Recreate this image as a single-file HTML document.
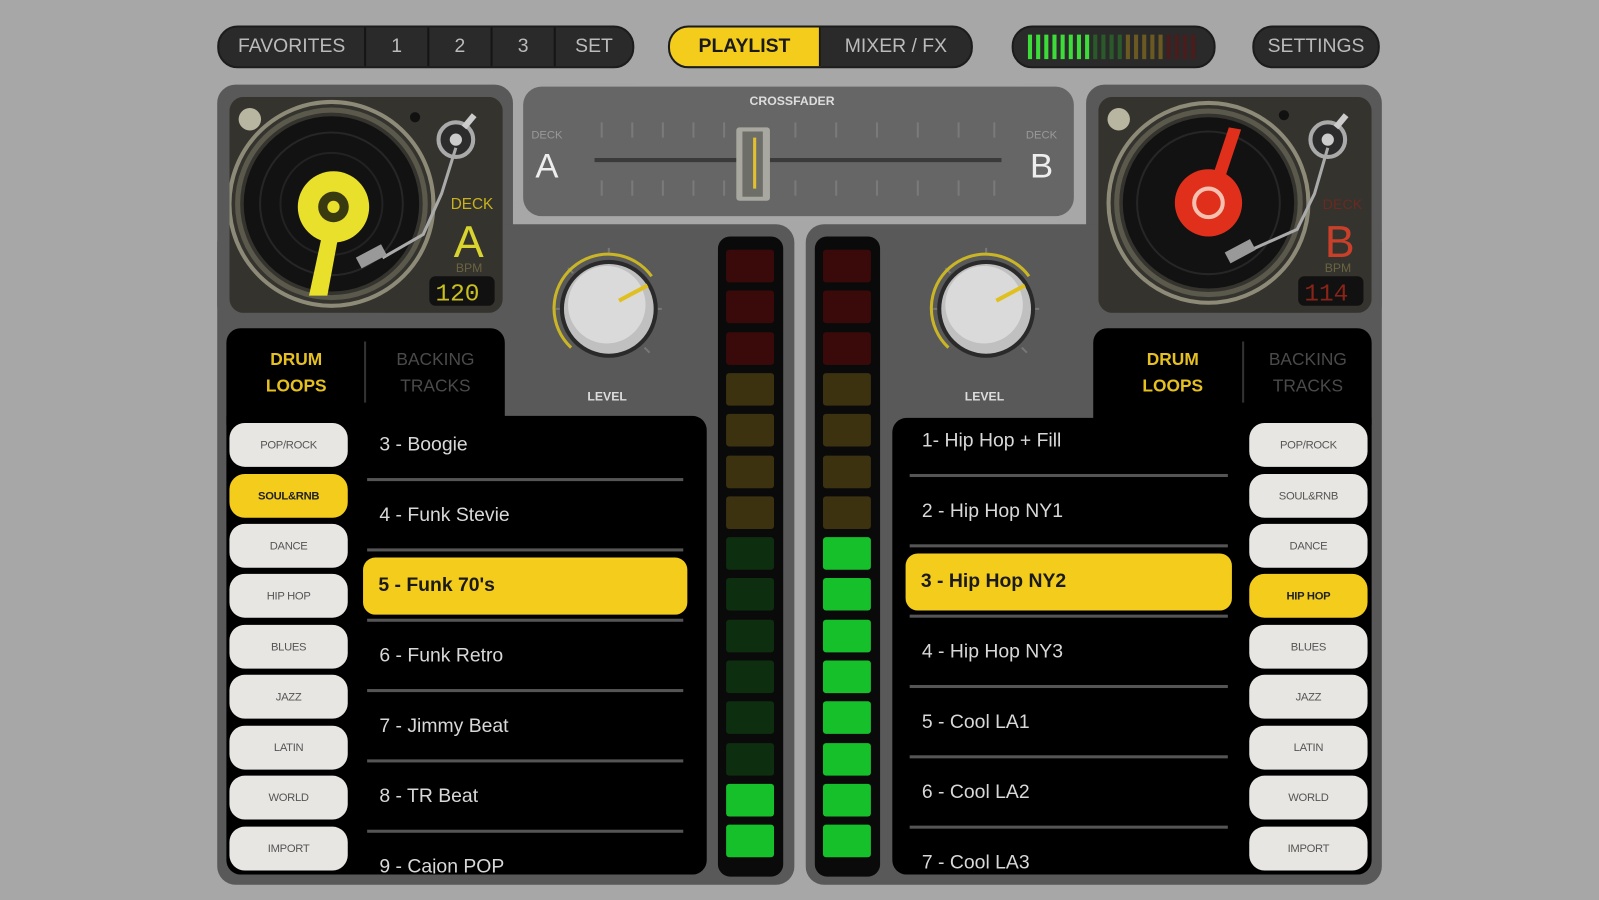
<!DOCTYPE html>
<html><head><meta charset="utf-8"><style>
*{box-sizing:border-box;margin:0;padding:0}
html,body{width:1599px;height:900px;overflow:hidden;background:#a7a7a7;font-family:"Liberation Sans",sans-serif}
#w{position:absolute;left:0;top:0;width:1568px;height:883px;transform:scale(1.0198,1.0193);transform-origin:0 0}
.a{position:absolute}
.pill{background:#2a2a2a;border-radius:20px;border:2px solid #1c1c1c;color:#bbb;font-size:19px;display:flex;align-items:center;overflow:hidden}
.pill span{height:100%;display:flex;align-items:center;justify-content:center;border-right:2px solid #151515}
.panel{background:#595959;border-radius:18px}
.g{position:absolute;left:225px;width:116px;height:43px;background:#e8e6e2;border-radius:15px;color:#555;font-size:11px;display:flex;align-items:center;justify-content:center;letter-spacing:-.3px;box-shadow:0 2px 2px #000}
.g.y{background:#f4cc1c;color:#222;font-weight:bold}
.t{position:absolute;color:#d8d8d8;font-size:19px}
.sep{position:absolute;height:3px;background:#555}
.hl{position:absolute;background:#f4cc1c;border-radius:12px;color:#1a1a1a;font-size:19px;font-weight:bold;padding-left:15px;display:flex;align-items:center}
.seg{position:absolute;width:47px;height:32px;border-radius:3px}
.tab{color:#e5c020;font-weight:bold;font-size:17px;text-align:center;line-height:26px}
.tab2{color:#4a4a4a;font-size:17px;text-align:center;line-height:26px}
</style></head><body><div id="w">
<div class="a pill" style="left:213px;top:25px;width:409px;height:42px">
<span style="width:144px">FAVORITES</span><span style="width:62px">1</span><span style="width:62px">2</span><span style="width:62px">3</span><span style="width:75px;border:none">SET</span></div>
<div class="a pill" style="left:655px;top:25px;width:299px;height:42px">
<span style="width:150px;background:#f4cc1c;color:#1a1a1a;font-weight:bold">PLAYLIST</span><span style="width:149px;border:none">MIXER / FX</span></div>
<div class="a pill" style="left:992px;top:25px;width:200px;height:42px;padding-left:12px">
<svg width="180" height="30"><g stroke-width="4">
<g stroke="#3ddc3a"><line x1="4" y1="3" x2="4" y2="27"/><line x1="12" y1="3" x2="12" y2="27"/><line x1="20" y1="3" x2="20" y2="27"/><line x1="28" y1="3" x2="28" y2="27"/><line x1="36" y1="3" x2="36" y2="27"/><line x1="44" y1="3" x2="44" y2="27"/><line x1="52" y1="3" x2="52" y2="27"/><line x1="60" y1="3" x2="60" y2="27"/></g>
<g stroke="#2a5a2a"><line x1="68" y1="3" x2="68" y2="27"/><line x1="76" y1="3" x2="76" y2="27"/><line x1="84" y1="3" x2="84" y2="27"/><line x1="92" y1="3" x2="92" y2="27"/></g>
<g stroke="#6a5a22"><line x1="100" y1="3" x2="100" y2="27"/><line x1="108" y1="3" x2="108" y2="27"/><line x1="116" y1="3" x2="116" y2="27"/><line x1="124" y1="3" x2="124" y2="27"/><line x1="132" y1="3" x2="132" y2="27"/></g>
<g stroke="#4a1c1c"><line x1="140" y1="3" x2="140" y2="27"/><line x1="148" y1="3" x2="148" y2="27"/><line x1="156" y1="3" x2="156" y2="27"/><line x1="164" y1="3" x2="164" y2="27"/></g></g></svg></div>
<div class="a pill" style="left:1228px;top:25px;width:125px;height:42px;justify-content:center">SETTINGS</div>

<div class="a panel" style="left:213px;top:83px;width:290px;height:235px"></div>
<div class="a panel" style="left:1065px;top:83px;width:290px;height:235px"></div>
<div class="a panel" style="left:213px;top:220px;width:566px;height:648px"></div>
<div class="a panel" style="left:790px;top:220px;width:565px;height:648px"></div>
<div class="a" style="left:508px;top:83px;width:550px;height:135px;background:#a7a7a7;border-radius:22px"></div>
<div class="a" style="left:513px;top:85px;width:540px;height:127px;background:#666;border-radius:18px"></div>
<div class="a" style="left:779px;top:222px;width:11px;height:650px;background:#a7a7a7"></div>

<div class="a" style="left:735px;top:92px;color:#ddd;font-size:12px;font-weight:bold">CROSSFADER</div>
<div class="a" style="left:521px;top:127px;color:#999;font-size:11px">DECK</div>
<div class="a" style="left:525px;top:144px;color:#eee;font-size:34px">A</div>
<div class="a" style="left:1006px;top:127px;color:#999;font-size:11px">DECK</div>
<div class="a" style="left:1010px;top:144px;color:#eee;font-size:34px">B</div>
<svg class="a" style="left:580px;top:115px" width="405" height="85">
<g stroke="#7a7a7a" stroke-width="2"><line x1="10" y1="5" x2="10" y2="20"/><line x1="40" y1="5" x2="40" y2="20"/><line x1="70" y1="5" x2="70" y2="20"/><line x1="100" y1="5" x2="100" y2="20"/><line x1="130" y1="5" x2="130" y2="20"/><line x1="200" y1="5" x2="200" y2="20"/><line x1="240" y1="5" x2="240" y2="20"/><line x1="280" y1="5" x2="280" y2="20"/><line x1="320" y1="5" x2="320" y2="20"/><line x1="360" y1="5" x2="360" y2="20"/><line x1="395" y1="5" x2="395" y2="20"/>
<line x1="10" y1="62" x2="10" y2="77"/><line x1="40" y1="62" x2="40" y2="77"/><line x1="70" y1="62" x2="70" y2="77"/><line x1="100" y1="62" x2="100" y2="77"/><line x1="130" y1="62" x2="130" y2="77"/><line x1="200" y1="62" x2="200" y2="77"/><line x1="240" y1="62" x2="240" y2="77"/><line x1="280" y1="62" x2="280" y2="77"/><line x1="320" y1="62" x2="320" y2="77"/><line x1="360" y1="62" x2="360" y2="77"/><line x1="395" y1="62" x2="395" y2="77"/></g>
<line x1="3" y1="42" x2="402" y2="42" stroke="#3a3a3a" stroke-width="4"/>
<rect x="142" y="10" width="33" height="72" rx="3" fill="#a8a8a0"/><rect x="148" y="14" width="20" height="64" fill="#6e6e68"/><line x1="160" y1="20" x2="160" y2="70" stroke="#e3c030" stroke-width="3"/></svg>

<svg class="a" style="left:225px;top:95px" width="268" height="212">
<rect width="268" height="212" rx="14" fill="#34332e"/>
<circle cx="100" cy="105" r="100" fill="none" stroke="#8d8a78" stroke-width="4"/>
<circle cx="100" cy="105" r="92" fill="none" stroke="#5b594c" stroke-width="5"/>
<circle cx="100" cy="105" r="86" fill="#121212"/>
<circle cx="100" cy="105" r="70" fill="none" stroke="#262626" stroke-width="2"/>
<circle cx="100" cy="105" r="50" fill="none" stroke="#222" stroke-width="2"/>
<path d="M92 130 L78 195 L96 195 L108 130Z" fill="#e8e02a"/>
<circle cx="102" cy="108" r="35" fill="#e8e02a"/>
<circle cx="102" cy="108" r="15" fill="#3a3a10"/><circle cx="102" cy="108" r="6" fill="#e8e02a"/>
<circle cx="20" cy="22" r="11" fill="#b8b5a0"/><circle cx="182" cy="20" r="5" fill="#111"/>
<circle cx="222" cy="42" r="17" fill="#2c2c2c" stroke="#aaa" stroke-width="4"/><circle cx="222" cy="42" r="6" fill="#ccc"/>
<path d="M230 30 L240 18" stroke="#ccc" stroke-width="6"/>
<path d="M222 50 L208 95 L190 135 L150 158" fill="none" stroke="#aaa" stroke-width="3"/>
<rect x="125" y="150" width="28" height="12" fill="#999" transform="rotate(-28 140 156)"/>
<text x="217" y="110" fill="#c9b21c" font-size="15" font-family="Liberation Sans">DECK</text>
<text x="220" y="157" fill="#d9d330" font-size="44" font-family="Liberation Sans">A</text>
<text x="222" y="172" fill="#6a6440" font-size="12" font-family="Liberation Sans">BPM</text>
<rect x="196" y="176" width="64" height="29" rx="6" fill="#111"/>
<text x="202" y="200" fill="#c9c020" font-size="24" font-family="Liberation Mono">120</text>
</svg>
<svg class="a" style="left:1077px;top:95px" width="268" height="212">
<rect width="268" height="212" rx="14" fill="#34332e"/>
<circle cx="108" cy="104" r="98" fill="none" stroke="#8d8a78" stroke-width="4"/>
<circle cx="108" cy="104" r="90" fill="none" stroke="#5b594c" stroke-width="5"/>
<circle cx="108" cy="104" r="84" fill="#121212"/>
<circle cx="108" cy="104" r="70" fill="none" stroke="#262626" stroke-width="2"/>
<path d="M110 84 L128 30 L140 32 L122 86Z" fill="#e0301c"/>
<circle cx="108" cy="104" r="33" fill="#e0301c"/>
<circle cx="108" cy="104" r="14" fill="none" stroke="#f4c0b0" stroke-width="4"/>
<circle cx="20" cy="22" r="11" fill="#b8b5a0"/><circle cx="182" cy="18" r="5" fill="#111"/>
<circle cx="225" cy="42" r="17" fill="#2c2c2c" stroke="#aaa" stroke-width="4"/><circle cx="225" cy="42" r="6" fill="#ccc"/>
<path d="M233 30 L243 18" stroke="#ccc" stroke-width="6"/>
<path d="M225 50 L212 95 L195 130 L150 150" fill="none" stroke="#aaa" stroke-width="3"/>
<rect x="125" y="145" width="28" height="12" fill="#999" transform="rotate(-28 140 151)"/>
<text x="220" y="110" fill="#6a2a20" font-size="14" font-family="Liberation Sans">DECK</text>
<text x="222" y="157" fill="#c8402a" font-size="44" font-family="Liberation Sans">B</text>
<text x="222" y="172" fill="#6a6440" font-size="12" font-family="Liberation Sans">BPM</text>
<rect x="196" y="176" width="64" height="29" rx="6" fill="#111"/>
<text x="202" y="200" fill="#8a2418" font-size="24" font-family="Liberation Mono">114</text>
</svg>

<svg class="a" style="left:537px;top:243px" width="120" height="125">
<g stroke="#777" stroke-width="2"><line x1="60" y1="0" x2="60" y2="5"/><line x1="105" y1="60" x2="112" y2="60"/><line x1="8" y1="60" x2="15" y2="60"/><line x1="95" y1="98" x2="100" y2="103"/><line x1="20" y1="20" x2="25" y2="25"/></g>
<path d="M23 98 A53 53 0 1 1 102 28" fill="none" stroke="#c9b526" stroke-width="3"/>
<circle cx="60" cy="60" r="48" fill="#2a2a2a"/>
<circle cx="60" cy="60" r="44" fill="#c0c0c0"/>
<circle cx="58" cy="56" r="38" fill="#dadada"/>
<line x1="70" y1="52" x2="98" y2="37" stroke="#e0c020" stroke-width="4"/></svg>
<svg class="a" style="left:907px;top:243px" width="120" height="125">
<g stroke="#777" stroke-width="2"><line x1="60" y1="0" x2="60" y2="5"/><line x1="105" y1="60" x2="112" y2="60"/><line x1="8" y1="60" x2="15" y2="60"/><line x1="95" y1="98" x2="100" y2="103"/><line x1="20" y1="20" x2="25" y2="25"/></g>
<path d="M23 98 A53 53 0 1 1 102 28" fill="none" stroke="#c9b526" stroke-width="3"/>
<circle cx="60" cy="60" r="48" fill="#2a2a2a"/>
<circle cx="60" cy="60" r="44" fill="#c0c0c0"/>
<circle cx="58" cy="56" r="38" fill="#dadada"/>
<line x1="70" y1="52" x2="98" y2="37" stroke="#e0c020" stroke-width="4"/></svg>
<div class="a" style="left:576px;top:382px;color:#ddd;font-size:12px;font-weight:bold">LEVEL</div>
<div class="a" style="left:946px;top:382px;color:#ddd;font-size:12px;font-weight:bold">LEVEL</div>

<div class="a" style="left:704px;top:232px;width:64px;height:628px;background:#0a0a0a;border-radius:12px"></div>
<div class="a" style="left:799px;top:232px;width:64px;height:628px;background:#0a0a0a;border-radius:12px"></div>
<div id="m1"></div><div id="m2"></div>

<div class="a" style="left:222px;top:322px;width:273px;height:95px;background:#000;border-radius:14px 14px 0 0"></div>
<div class="a tab" style="left:228px;top:340px;width:125px">DRUM<br>LOOPS</div>
<div class="a" style="left:357px;top:335px;width:2px;height:60px;background:#333"></div>
<div class="a tab2" style="left:362px;top:340px;width:130px">BACKING<br>TRACKS</div>
<div class="a" style="left:222px;top:408px;width:471px;height:450px;background:#000;border-radius:0 14px 14px 14px"></div>
<div class="g" style="top:415px">POP/ROCK</div>
<div class="g y" style="top:465px">SOUL&amp;RNB</div>
<div class="g" style="top:514px">DANCE</div>
<div class="g" style="top:563px">HIP HOP</div>
<div class="g" style="top:613px">BLUES</div>
<div class="g" style="top:662px">JAZZ</div>
<div class="g" style="top:712px">LATIN</div>
<div class="g" style="top:761px">WORLD</div>
<div class="g" style="top:811px">IMPORT</div>
<div class="t" style="left:372px;top:426px">3 - Boogie</div>
<div class="sep" style="left:360px;top:469px;width:310px"></div>
<div class="t" style="left:372px;top:495px">4 - Funk Stevie</div>
<div class="sep" style="left:360px;top:538px;width:310px"></div>
<div class="hl" style="left:356px;top:547px;width:318px;height:56px">5 - Funk 70's</div>
<div class="sep" style="left:360px;top:607px;width:310px"></div>
<div class="t" style="left:372px;top:633px">6 - Funk Retro</div>
<div class="sep" style="left:360px;top:676px;width:310px"></div>
<div class="t" style="left:372px;top:702px">7 - Jimmy Beat</div>
<div class="sep" style="left:360px;top:745px;width:310px"></div>
<div class="t" style="left:372px;top:771px">8 - TR Beat</div>
<div class="sep" style="left:360px;top:814px;width:310px"></div>
<div class="a" style="left:360px;top:838px;width:320px;height:19px;overflow:hidden"><div class="t" style="left:12px;top:2px">9 - Cajon POP</div></div>

<div class="a" style="left:1072px;top:322px;width:273px;height:95px;background:#000;border-radius:14px 14px 0 0"></div>
<div class="a tab" style="left:1085px;top:340px;width:130px">DRUM<br>LOOPS</div>
<div class="a" style="left:1218px;top:335px;width:2px;height:60px;background:#333"></div>
<div class="a tab2" style="left:1220px;top:340px;width:125px">BACKING<br>TRACKS</div>
<div class="a" style="left:875px;top:410px;width:470px;height:448px;background:#000;border-radius:14px 0 14px 14px"></div>
<div class="g" style="left:1225px;top:415px">POP/ROCK</div>
<div class="g" style="left:1225px;top:465px">SOUL&amp;RNB</div>
<div class="g" style="left:1225px;top:514px">DANCE</div>
<div class="g y" style="left:1225px;top:563px">HIP HOP</div>
<div class="g" style="left:1225px;top:613px">BLUES</div>
<div class="g" style="left:1225px;top:662px">JAZZ</div>
<div class="g" style="left:1225px;top:712px">LATIN</div>
<div class="g" style="left:1225px;top:761px">WORLD</div>
<div class="g" style="left:1225px;top:811px">IMPORT</div>
<div class="t" style="left:904px;top:422px">1- Hip Hop + Fill</div>
<div class="sep" style="left:892px;top:465px;width:312px"></div>
<div class="t" style="left:904px;top:491px">2 - Hip Hop NY1</div>
<div class="sep" style="left:892px;top:534px;width:312px"></div>
<div class="hl" style="left:888px;top:543px;width:320px;height:56px">3 - Hip Hop NY2</div>
<div class="sep" style="left:892px;top:603px;width:312px"></div>
<div class="t" style="left:904px;top:629px">4 - Hip Hop NY3</div>
<div class="sep" style="left:892px;top:672px;width:312px"></div>
<div class="t" style="left:904px;top:698px">5 - Cool LA1</div>
<div class="sep" style="left:892px;top:741px;width:312px"></div>
<div class="t" style="left:904px;top:767px">6 - Cool LA2</div>
<div class="sep" style="left:892px;top:810px;width:312px"></div>
<div class="a" style="left:892px;top:834px;width:320px;height:22px;overflow:hidden"><div class="t" style="left:12px;top:2px">7 - Cool LA3</div></div>
</div>
<script>
function meter(id,x,lit){var h='';for(var i=0;i<15;i++){var y=245+i*40.3,c;
if(i<3)c='#3a0a0a';else if(i<7)c='#3c3210';else c=(i>=lit)?'#16c02a':'#0e2e10';
h+='<div class="seg" style="left:'+x+'px;top:'+y+'px;background:'+c+'"></div>';}
document.getElementById(id).innerHTML=h;}
meter('m1',712,13);meter('m2',807,7);
</script>
</body></html>
